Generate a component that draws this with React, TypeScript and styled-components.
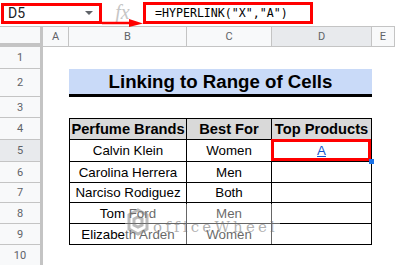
import React from "react";
import styled, { createGlobalStyle } from "styled-components";

type Product = {
    brand: string;
    best: string;
    link?: string;
};

const columns = [
    { key: "A", width: 26 },
    { key: "B", width: 118 },
    { key: "C", width: 85 },
    { key: "D", width: 100 },
    { key: "E", width: 23 },
];

const rowHeights = [22, 28, 21, 22, 22, 21, 20, 21, 21, 21];

const products: Product[] = [
    { brand: "Calvin Klein", best: "Women", link: "A" },
    { brand: "Carolina Herrera", best: "Men" },
    { brand: "Narciso Rodiguez", best: "Both" },
    { brand: "Tom Ford", best: "Men" },
    { brand: "Elizabeth Arden", best: "Women" },
];

const GlobalStyle = createGlobalStyle`
    body {
        margin: 0;
        background: #ffffff;
        font-family: "Liberation Sans", Arial, sans-serif;
    }
`;

const Page = styled.div`
    position: relative;
    width: 395px;
    height: 265px;
    overflow: hidden;
    background: #ffffff;
`;

const FormulaBar = styled.div`
    display: flex;
    align-items: center;
    height: 27px;
    box-sizing: border-box;
    border-bottom: 1px solid #c4c4c4;
`;

const NameBox = styled.div`
    display: flex;
    align-items: center;
    justify-content: space-between;
    box-sizing: border-box;
    width: 101px;
    height: 21px;
    margin-left: 1px;
    padding: 0 6px 0 4px;
    border: 3px solid #ff0000;
    font-family: Roboto, "Liberation Sans", sans-serif;
    font-size: 14px;
    color: #202124;
`;

const Caret = styled.span`
    width: 0;
    height: 0;
    border-left: 4px solid transparent;
    border-right: 4px solid transparent;
    border-top: 4px solid #5f6368;
`;

const FxLabel = styled.span`
    width: 41px;
    text-align: center;
    font-family: "Liberation Serif", serif;
    font-style: italic;
    font-size: 20px;
    color: #c6c6c6;
    line-height: 20px;
    margin-top: -3px;
`;

const FormulaBox = styled.div`
    display: flex;
    align-items: center;
    box-sizing: border-box;
    width: 170px;
    height: 22px;
    padding-left: 9px;
    border: 3px solid #ff0000;
    font-family: "DejaVu Sans Mono", "Liberation Mono", monospace;
    font-size: 11.6px;
    color: #000000;
`;

const Arrow = styled.svg`
    position: absolute;
    left: 100px;
    top: 17px;
`;

const Sheet = styled.div`
    display: grid;
    grid-template-columns: 43px ${columns.map(c => `${c.width}px`).join(" ")};
    grid-template-rows: 20px ${rowHeights.map(h => `${h}px`).join(" ")};
`;

const Corner = styled.div`
    box-sizing: border-box;
    background: #f8f9fa;
    border-right: 3px solid #c4c4c4;
    border-bottom: 4px solid #c4c4c4;
`;

const ColHeader = styled.div<{ $selected?: boolean }>`
    display: flex;
    align-items: center;
    justify-content: center;
    box-sizing: border-box;
    background: ${props => (props.$selected ? "#e8eaed" : "#f8f9fa")};
    border-right: 1px solid #c4c4c4;
    border-bottom: 1px solid #c4c4c4;
    font-family: Roboto, "Liberation Sans", sans-serif;
    font-size: 11px;
    color: #5f6368;
`;

const RowHeader = styled.div<{ $selected?: boolean }>`
    display: flex;
    align-items: center;
    justify-content: center;
    box-sizing: border-box;
    background: ${props => (props.$selected ? "#e8eaed" : "#f8f9fa")};
    border-right: 3px solid #c4c4c4;
    border-bottom: 1px solid #c4c4c4;
    font-family: Roboto, "Liberation Sans", sans-serif;
    font-size: 11px;
    color: #5f6368;
`;

const Blank = styled.div``;

const TitleCell = styled.div`
    grid-column: span 3;
    display: flex;
    align-items: center;
    justify-content: center;
    box-sizing: border-box;
    background: #c9daf8;
    border-bottom: 3px solid #000000;
    font-weight: 700;
    font-size: 18.67px;
    color: #000000;
`;

const TableCell = styled.div<{ $first?: boolean; $head?: boolean }>`
    position: relative;
    display: flex;
    align-items: center;
    justify-content: center;
    box-sizing: border-box;
    background: ${props => (props.$head ? "#d9d9d9" : "#ffffff")};
    border-right: 1px solid #000000;
    border-bottom: 1px solid #000000;
    border-top: ${props => (props.$head ? "1px solid #000000" : "none")};
    border-left: ${props => (props.$first ? "1px solid #000000" : "none")};
    font-weight: ${props => (props.$head ? 700 : 400)};
    font-size: ${props => (props.$head ? "14.67px" : "13.33px")};
    color: #000000;
    white-space: nowrap;
`;

const ActiveCell = styled(TableCell)`
    &::after {
        content: "";
        position: absolute;
        top: -1px;
        left: -1px;
        right: 0;
        bottom: 0;
        border: 3px solid #ff0000;
    }
`;

const Handle = styled.span`
    position: absolute;
    right: -3px;
    bottom: -3px;
    width: 5px;
    height: 5px;
    background: #1a73e8;
    z-index: 2;
`;

const Link = styled.span`
    color: #1155cc;
    text-decoration: underline;
`;

const Watermark = styled.div`
    position: absolute;
    left: 125px;
    top: 204px;
    display: flex;
    align-items: center;
    gap: 4px;
    padding: 0 2px;
    height: 40px;
    background: rgba(255, 255, 255, 0.4);
`;

const WatermarkText = styled.span`
    font-family: "DejaVu Serif", "Liberation Serif", serif;
    font-size: 15px;
    letter-spacing: 3.2px;
    color: rgba(110, 110, 110, 0.55);
    margin-top: 5px;
`;

const Logo: React.FC = () => (
    <svg width="22" height="34" viewBox="0 0 22 34">
        <g fill="none" stroke="rgba(120,120,120,0.5)" strokeWidth="3">
            <path d="M11 3 L20 8 L20 22 L11 27 L2 22 L2 8 Z" />
            <path d="M7 12 L11 10 L15 12 L15 18 L11 20 L7 18 Z" />
        </g>
    </svg>
);

export default function App() {
    const renderEmptyRow = (n: number) => (
        <React.Fragment key={n}>
            <RowHeader>{n}</RowHeader>
            {columns.map(c => (
                <Blank key={c.key} />
            ))}
        </React.Fragment>
    );

    return (
        <Page>
            <GlobalStyle />
            <FormulaBar>
                <NameBox>
                    D5
                    <Caret />
                </NameBox>
                <FxLabel>fx</FxLabel>
                <FormulaBox>=HYPERLINK("X","A")</FormulaBox>
            </FormulaBar>
            <Arrow width="46" height="14" viewBox="0 0 46 14">
                <line x1="2" y1="6" x2="32" y2="6" stroke="#ff0000" strokeWidth="2.5" />
                <polygon points="29,2 43,6.5 29,10" fill="#ff0000" />
            </Arrow>

            <Sheet>
                <Corner />
                {columns.map(c => (
                    <ColHeader key={c.key} $selected={c.key === "D"}>
                        {c.key}
                    </ColHeader>
                ))}

                {renderEmptyRow(1)}

                <RowHeader>2</RowHeader>
                <Blank />
                <TitleCell>Linking to Range of Cells</TitleCell>
                <Blank />

                {renderEmptyRow(3)}

                <RowHeader>4</RowHeader>
                <Blank />
                <TableCell $head $first>
                    Perfume Brands
                </TableCell>
                <TableCell $head>Best For</TableCell>
                <TableCell $head>Top Products</TableCell>
                <Blank />

                {products.map((p, i) => (
                    <React.Fragment key={p.brand}>
                        <RowHeader $selected={i === 0}>{i + 5}</RowHeader>
                        <Blank />
                        <TableCell $first>{p.brand}</TableCell>
                        <TableCell>{p.best}</TableCell>
                        {i === 0 ? (
                            <ActiveCell>
                                <Link>{p.link}</Link>
                                <Handle />
                            </ActiveCell>
                        ) : (
                            <TableCell>{p.link}</TableCell>
                        )}
                        <Blank />
                    </React.Fragment>
                ))}

                {renderEmptyRow(10)}
            </Sheet>

            <Watermark>
                <Logo />
                <WatermarkText>officeWheel</WatermarkText>
            </Watermark>
        </Page>
    );
}
